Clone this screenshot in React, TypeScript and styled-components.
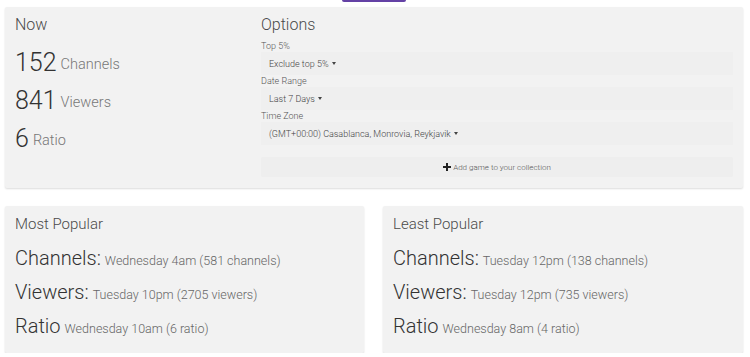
import React from 'react';
import styled, { createGlobalStyle } from 'styled-components';

const GlobalStyle = createGlobalStyle`
  html, body {
    margin: 0;
    padding: 0;
    background: #fff;
    font-family: Roboto, "Liberation Sans", Arial, sans-serif;
  }
  * { box-sizing: border-box; }
`;

const Page = styled.div`
  padding: 0 7px 0 5px;
`;

const TopStrip = styled.div`
  height: 7px;
  display: flex;
  justify-content: center;
`;

const PurpleTab = styled.div`
  width: 64px;
  height: 2px;
  background: #6441a5;
  border-radius: 0 0 2px 2px;
`;

const Card = styled.div`
  background: #f2f2f2;
  border-radius: 2px;
  box-shadow: 0 1px 2px rgba(0, 0, 0, 0.14);
  padding: 8px 10px 10px 10px;
`;

const TopCard = styled(Card)`
  display: grid;
  grid-template-columns: 246px 1fr;
  padding-bottom: 11px;
`;

const Heading = styled.div<{ $size?: number }>`
  font-size: ${({ $size }) => $size ?? 16}px;
  font-weight: 300;
  line-height: 20px;
  color: #4a4a4a;
`;

const StatList = styled.div`
  margin-top: 8px;
`;

const Stat = styled.div`
  height: 38px;
  display: flex;
  align-items: center;
  gap: 4px;
  white-space: nowrap;
`;

const Big = styled.span`
  font-size: 25px;
  font-weight: 300;
  color: #333;
`;

const Unit = styled.span`
  font-size: 14.5px;
  font-weight: 300;
  color: #777;
  position: relative;
  top: 2px;
`;

const OptionsForm = styled.div`
  margin-top: 5px;
`;

const Label = styled.div`
  font-size: 9px;
  font-weight: 300;
  line-height: 12px;
  color: #555;
`;

const Select = styled.div`
  height: 23px;
  display: flex;
  align-items: center;
  padding-left: 8px;
  font-size: 9px;
  font-weight: 300;
  color: #444;
  background: #efefef;
`;

const Caret = styled.span`
  display: inline-block;
  margin-left: 3px;
  width: 0;
  height: 0;
  border-left: 2.5px solid transparent;
  border-right: 2.5px solid transparent;
  border-top: 3px solid #444;
`;

const AddButton = styled.div`
  margin-top: 12px;
  height: 20px;
  display: flex;
  align-items: center;
  justify-content: center;
  gap: 2px;
  font-size: 8px;
  font-weight: 300;
  color: #555;
  background: #eeeeee;
  border-radius: 2px;
`;

const BottomRow = styled.div`
  margin-top: 18px;
  display: grid;
  grid-template-columns: 359px 360px;
  justify-content: space-between;
`;

const PopCard = styled(Card)`
  height: 147px;
`;

const PopList = styled.div`
  margin-top: 7px;
`;

const PopRow = styled.div`
  height: 34px;
  display: flex;
  align-items: center;
  gap: 4px;
  white-space: nowrap;
`;

const PopKey = styled.span`
  font-size: 20px;
  font-weight: 300;
  color: #333;
`;

const PopValue = styled.span`
  font-size: 12.5px;
  font-weight: 300;
  color: #666;
  position: relative;
  top: 2px;
`;

const PlusIcon = () => (
  <svg width="8" height="8" viewBox="0 0 8 8">
    <path d="M3 0h2v3h3v2H5v3H3V5H0V3h3z" fill="#222" />
  </svg>
);

type PopItem = { key: string; value: string };

const mostPopular: PopItem[] = [
  { key: 'Channels:', value: 'Wednesday 4am (581 channels)' },
  { key: 'Viewers:', value: 'Tuesday 10pm (2705 viewers)' },
  { key: 'Ratio', value: 'Wednesday 10am (6 ratio)' },
];

const leastPopular: PopItem[] = [
  { key: 'Channels:', value: 'Tuesday 12pm (138 channels)' },
  { key: 'Viewers:', value: 'Tuesday 12pm (735 viewers)' },
  { key: 'Ratio', value: 'Wednesday 8am (4 ratio)' },
];

const options = [
  { label: 'Top 5%', value: 'Exclude top 5%' },
  { label: 'Date Range', value: 'Last 7 Days' },
  { label: 'Time Zone', value: '(GMT+00:00) Casablanca, Monrovia, Reykjavik' },
];

const PopularCard: React.FC<{ title: string; items: PopItem[] }> = ({ title, items }) => (
  <PopCard>
    <Heading $size={15}>{title}</Heading>
    <PopList>
      {items.map((it) => (
        <PopRow key={it.key}>
          <PopKey>{it.key}</PopKey>
          <PopValue>{it.value}</PopValue>
        </PopRow>
      ))}
    </PopList>
  </PopCard>
);

const App: React.FC = () => {
  return (
    <>
      <GlobalStyle />
      <Page>
        <TopStrip>
          <PurpleTab />
        </TopStrip>
        <TopCard>
          <div>
            <Heading>Now</Heading>
            <StatList>
              <Stat><Big>152</Big><Unit>Channels</Unit></Stat>
              <Stat><Big>841</Big><Unit>Viewers</Unit></Stat>
              <Stat><Big>6</Big><Unit>Ratio</Unit></Stat>
            </StatList>
          </div>
          <div>
            <Heading>Options</Heading>
            <OptionsForm>
              {options.map((o) => (
                <div key={o.label}>
                  <Label>{o.label}</Label>
                  <Select>
                    {o.value}
                    <Caret />
                  </Select>
                </div>
              ))}
            </OptionsForm>
            <AddButton>
              <PlusIcon />
              Add game to your collection
            </AddButton>
          </div>
        </TopCard>
        <BottomRow>
          <PopularCard title="Most Popular" items={mostPopular} />
          <PopularCard title="Least Popular" items={leastPopular} />
        </BottomRow>
      </Page>
    </>
  );
};

export default App;
